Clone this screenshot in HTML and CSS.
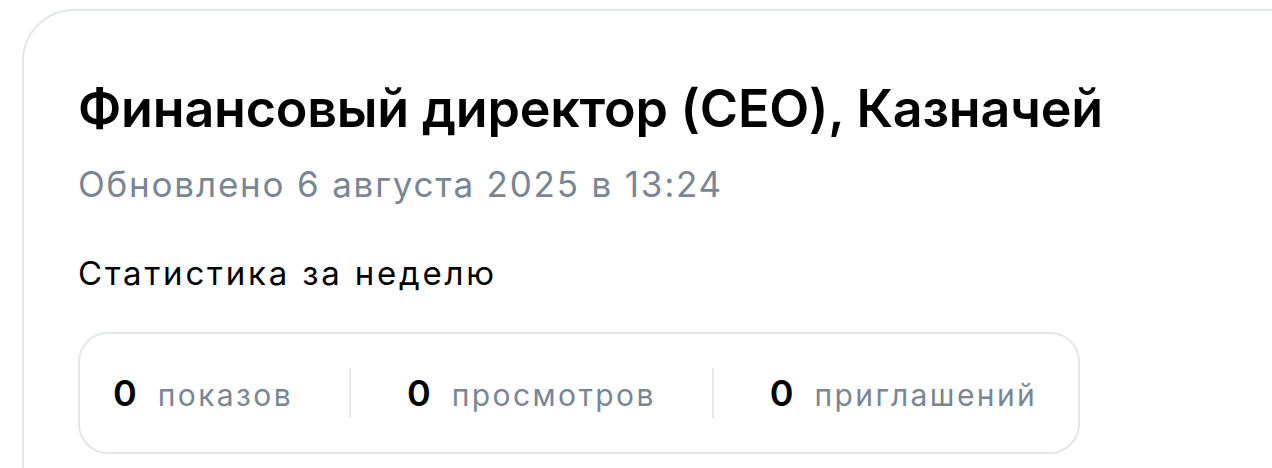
FILE: index.html
```html
<!DOCTYPE html>
<html lang="ru">
<head>
  <meta charset="UTF-8" />
  <meta name="viewport" content="width=device-width, initial-scale=1.0" />
  <title>Резюме</title>
  <link rel="stylesheet" href="styles.css">
</head>
<body>
  <main class="card">
    <h1 class="title">Финансовый директор (CEO), Казначей</h1>
    <p class="updated">Обновлено 6 августа 2025 в 13:24</p>

    <h2 class="stats-title">Статистика за неделю</h2>
    <div class="stats">
      <div class="stat"><span class="stat-num">0</span><span class="stat-label">показов</span></div>
      <div class="divider"></div>
      <div class="stat"><span class="stat-num">0</span><span class="stat-label">просмотров</span></div>
      <div class="divider"></div>
      <div class="stat"><span class="stat-num">0</span><span class="stat-label">приглашений</span></div>
    </div>
  </main>
</body>
</html>
```

FILE: styles.css
```css
* {
  box-sizing: border-box;
}
body {
  margin: 0;
  background-color: #ffffff;
  color: #000000;
  font-family: Inter, "Noto Sans", sans-serif;
  overflow: hidden;
}
.card {
  margin: 9px 0 0 22px;
  width: 1400px;
  min-height: 600px;
  border: 2px solid #e3e6eb;
  border-radius: 52px 0 0 0;
  padding: 68px 0 0 54px;
}
.title {
  margin: 0;
  font-size: 52px;
  font-weight: 600;
  line-height: 60px;
  letter-spacing: -0.2px;
}
.updated {
  margin: 24px 0 0;
  font-size: 35px;
  line-height: 42px;
  letter-spacing: 1.8px;
  color: #7a8694;
}
.stats-title {
  margin: 49px 0 0;
  font-size: 33px;
  font-weight: 400;
  line-height: 38px;
  letter-spacing: 2.8px;
}
.stats {
  display: inline-flex;
  align-items: center;
  gap: 56px;
  margin-top: 40px;
  height: 122px;
  padding: 0 41px 0 33px;
  border: 2px solid #e3e6eb;
  border-radius: 30px;
}
.stat {
  display: flex;
  align-items: baseline;
  gap: 21px;
}
.stat-num {
  font-size: 36px;
  font-weight: 600;
}
.stat-label {
  font-size: 30px;
  letter-spacing: 2.4px;
  color: #7a8694;
}
.divider {
  width: 2px;
  height: 50px;
  background-color: #e6e8ec;
}
```
